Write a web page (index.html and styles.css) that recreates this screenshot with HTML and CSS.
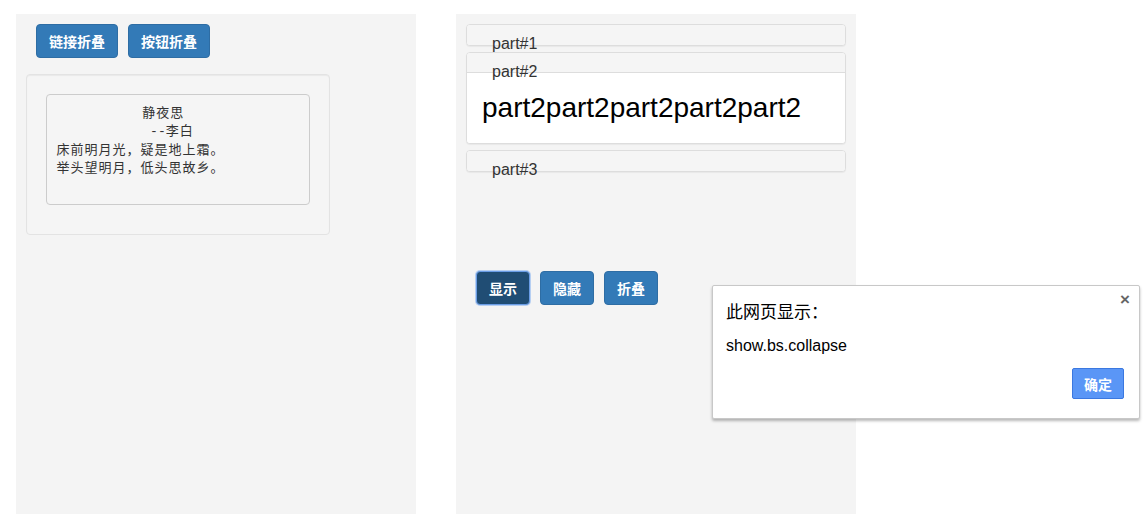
FILE: index.html
```html
<!DOCTYPE html>
<html lang="zh">
<head>
<meta charset="utf-8">
<title>collapse</title>
<link rel="stylesheet" href="styles.css">
</head>
<body>
<div class="page">
  <section class="col col-left">
    <div class="btn-row">
      <a class="btn btn-primary">链接折叠</a>
      <button class="btn btn-primary">按钮折叠</button>
    </div>
    <div class="well">
<pre class="poem">           <span class="cjk">静夜思</span>
            --<span class="cjk">李白</span>
<span class="cjk">床前明月光，疑是地上霜。</span>
<span class="cjk">举头望明月，低头思故乡。</span>
</pre>
    </div>
  </section>

  <section class="col col-right">
    <div class="panel-group">
      <div class="panel">
        <div class="panel-heading"><h4 class="panel-title">part#1</h4></div>
      </div>
      <div class="panel">
        <div class="panel-heading with-body"><h4 class="panel-title">part#2</h4></div>
        <div class="panel-body">part2part2part2part2part2</div>
      </div>
      <div class="panel">
        <div class="panel-heading"><h4 class="panel-title">part#3</h4></div>
      </div>
    </div>
    <div class="btn-row btn-row-right">
      <button class="btn btn-primary active">显示</button>
      <button class="btn btn-primary">隐藏</button>
      <button class="btn btn-primary">折叠</button>
    </div>
  </section>
</div>

<div class="dialog">
  <span class="dialog-close">×</span>
  <div class="dialog-title">此网页显示：</div>
  <div class="dialog-msg">show.bs.collapse</div>
  <div class="dialog-actions">
    <button class="dialog-ok">确定</button>
  </div>
</div>
</body>
</html>
```

FILE: styles.css
```css
* { box-sizing: border-box; }

html, body {
  margin: 0;
  padding: 0;
  background: #fff;
}

body {
  font-family: "Liberation Sans", "Noto Sans CJK SC", Arial, sans-serif;
  font-size: 14px;
  color: #333;
}

.page {
  display: flex;
  gap: 40px;
  padding: 14px 16px 10px 16px;
}

.col {
  width: 400px;
  height: 500px;
  background: #f4f4f4;
}

.col-left {
  padding: 10px 10px 0 10px;
}

.btn-row {
  display: flex;
  gap: 10px;
  padding-left: 10px;
}

.btn {
  display: inline-block;
  height: 34px;
  padding: 0 12px;
  font-family: "Noto Sans CJK SC", "Liberation Sans", sans-serif;
  font-size: 14px;
  font-weight: 700;
  line-height: 32px;
  border-radius: 4px;
  border: 1px solid transparent;
  cursor: pointer;
  margin: 0;
}

.btn-primary {
  color: #fff;
  background: #337ab7;
  border-color: #2e6da4;
}

.btn-primary.active {
  background: #204d74;
  border-color: #6a9de6;
  box-shadow: 0 0 0 1px rgba(120, 170, 240, 0.5);
}

.well {
  margin-top: 16px;
  width: 304px;
  padding: 19px;
  background: #f5f5f5;
  border: 1px solid #e3e3e3;
  border-radius: 4px;
  box-shadow: inset 0 1px 1px rgba(0, 0, 0, 0.05);
}

.poem {
  margin: 0 0 10px 0;
  padding: 9.5px;
  height: 111px;
  font-family: "Liberation Mono", "Noto Sans CJK SC", monospace;
  font-size: 13px;
  line-height: 18.57px;
  color: #333;
  background: #f5f5f5;
  border: 1px solid #ccc;
  border-radius: 4px;
  white-space: pre;
  overflow: hidden;
}

.poem .cjk {
  letter-spacing: 1px;
}

.col-right {
  padding: 10px 10px 0 10px;
}

.panel-group {
  display: flex;
  flex-direction: column;
  gap: 6px;
}

.panel {
  background: #fff;
  border: 1px solid #ddd;
  border-radius: 4px;
  box-shadow: 0 1px 1px rgba(0, 0, 0, 0.05);
}

.panel-heading {
  height: 20px;
  padding: 0 25px;
  background: #f5f5f5;
  border-radius: 3px;
}

.panel-heading.with-body {
  border-bottom: 1px solid #ddd;
  border-radius: 3px 3px 0 0;
}

.panel-title {
  margin: 0;
  padding-top: 8px;
  font-size: 16px;
  font-weight: 400;
  line-height: 22px;
  color: #333;
  white-space: nowrap;
}

.panel-body {
  padding: 15px;
  font-size: 28px;
  line-height: 40px;
  color: #000;
  background: #fff;
  border-radius: 0 0 3px 3px;
}

.btn-row-right {
  margin-top: 99px;
}

.dialog {
  position: absolute;
  left: 712px;
  top: 285px;
  width: 428px;
  height: 134px;
  background: #fff;
  border: 1px solid #c8c8c8;
  border-radius: 2px;
  box-shadow: 0 2px 3px rgba(0, 0, 0, 0.28);
  padding: 13px 15px 15px 13px;
  font-family: "Liberation Sans", "Noto Sans CJK SC", sans-serif;
  color: #000;
}

.dialog-close {
  position: absolute;
  right: 9px;
  top: 3px;
  font-size: 17px;
  font-weight: 700;
  color: #666;
  line-height: 22px;
}

.dialog-title {
  font-family: "Noto Sans CJK SC", sans-serif;
  font-size: 17px;
  line-height: 24px;
}

.dialog-msg {
  margin-top: 13px;
  font-size: 16px;
  line-height: 20px;
}

.dialog-actions {
  display: flex;
  justify-content: flex-end;
  margin-top: 12px;
}

.dialog-ok {
  width: 52px;
  height: 31px;
  margin: 0;
  padding: 0;
  background: #5a96f6;
  border: 1px solid #3b78e0;
  border-radius: 2px;
  color: #fff;
  font-family: "Noto Sans CJK SC", sans-serif;
  font-size: 14px;
  font-weight: 700;
}
```
